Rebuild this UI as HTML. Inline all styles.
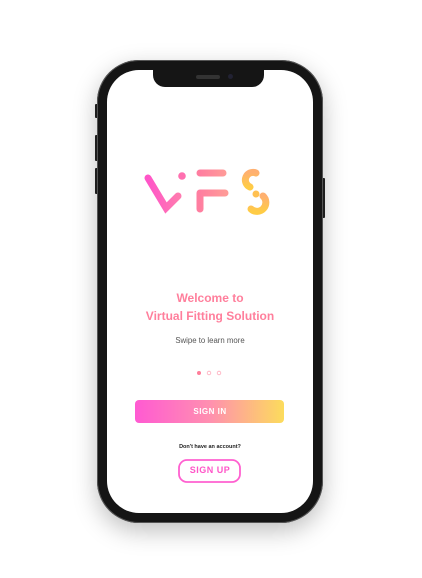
<!DOCTYPE html>
<html><head><meta charset="utf-8"><style>
html,body{margin:0;padding:0;background:#fff;width:422px;height:578px;overflow:hidden;font-family:"Liberation Sans",sans-serif}
.phone{position:absolute;left:97px;top:60px;width:226px;height:463px;background:#151515;border-radius:42px;box-shadow:0 8px 24px rgba(0,0,0,.25),0 0 0 1px #555 inset}
.screen{position:absolute;left:107px;top:70px;width:206px;height:443px;background:#fff;border-radius:32px;overflow:hidden}
.notch{position:absolute;left:153px;top:69px;width:111px;height:18px;background:#151515;border-radius:0 0 12px 12px}
.spk{position:absolute;left:196px;top:75px;width:24px;height:4px;background:#333;border-radius:2px}
.cam{position:absolute;left:228px;top:74px;width:5px;height:5px;background:#223;border-radius:50%}
.btn{position:absolute;background:#222;border-radius:1px}
.t{position:absolute;left:107px;width:206px;text-align:center}
</style></head><body>
<div class="btn" style="left:95px;top:104px;width:3px;height:14px"></div>
<div class="btn" style="left:95px;top:135px;width:3px;height:26px"></div>
<div class="btn" style="left:95px;top:168px;width:3px;height:26px"></div>
<div class="btn" style="left:322px;top:178px;width:3px;height:40px"></div>
<div class="phone"></div>
<div class="screen"></div>
<div class="notch"></div><div class="spk"></div><div class="cam"></div>
<svg style="position:absolute;left:0;top:0" width="422" height="578">
<defs>
<linearGradient id="v" x1="0" x2="1"><stop offset="0" stop-color="#ff55c8"/><stop offset="1" stop-color="#ff7ab0"/></linearGradient>
<linearGradient id="f" x1="0" x2="1"><stop offset="0" stop-color="#ff7ea0"/><stop offset="1" stop-color="#ff9a98"/></linearGradient>
<linearGradient id="s" x1="0" x2="0" y1="0" y2="1"><stop offset="0" stop-color="#ffb070"/><stop offset="1" stop-color="#ffcc45"/></linearGradient>
<linearGradient id="b" x1="0" x2="1"><stop offset="0" stop-color="#ff5ad2"/><stop offset=".5" stop-color="#ff8fb0"/><stop offset="1" stop-color="#fcdc5c"/></linearGradient>
</defs>
<g fill="none" stroke-linecap="round" stroke-width="7">
<path d="M148 178 L166 208 L178 196" stroke="url(#v)"/>
<path d="M200 173 H223 M200 193 V209 M200 193 H225" stroke="url(#f)"/>
<path d="M256 173 A7 7 0 0 0 250 187" stroke="url(#s)"/>
<path d="M263 196 A8 8 0 0 1 251 209" stroke="url(#s)"/>
</g>
<circle cx="182" cy="176" r="3.8" fill="#ff70b0"/>
<circle cx="256" cy="194" r="3.5" fill="#ffc050"/>
<circle cx="199" cy="373" r="2" fill="#ff7e9a"/>
<circle cx="209" cy="373" r="1.8" fill="none" stroke="#ffaabb" stroke-width=".8"/>
<circle cx="219" cy="373" r="1.8" fill="none" stroke="#ffaabb" stroke-width=".8"/>
<rect x="135" y="400" width="149" height="23" rx="4" fill="url(#b)"/>
<rect x="179" y="460" width="61" height="22" rx="8" fill="#fff" stroke="#ff60d0" stroke-width="1.8"/>
</svg>
<div class="t" style="top:289px;font-size:12px;font-weight:bold;color:#ff7f9c;line-height:18px">Welcome to<br>Virtual Fitting Solution</div>
<div class="t" style="top:336px;font-size:7.8px;color:#555">Swipe to learn more</div>
<div class="t" style="top:407px;font-size:8px;font-weight:bold;color:#fff;letter-spacing:.5px">SIGN IN</div>
<div class="t" style="top:444px;font-size:5.5px;font-weight:bold;color:#222">Don't have an account?</div>
<div class="t" style="top:465px;font-size:9px;font-weight:bold;color:#ff55c8;letter-spacing:.5px">SIGN UP</div>
</body></html>
